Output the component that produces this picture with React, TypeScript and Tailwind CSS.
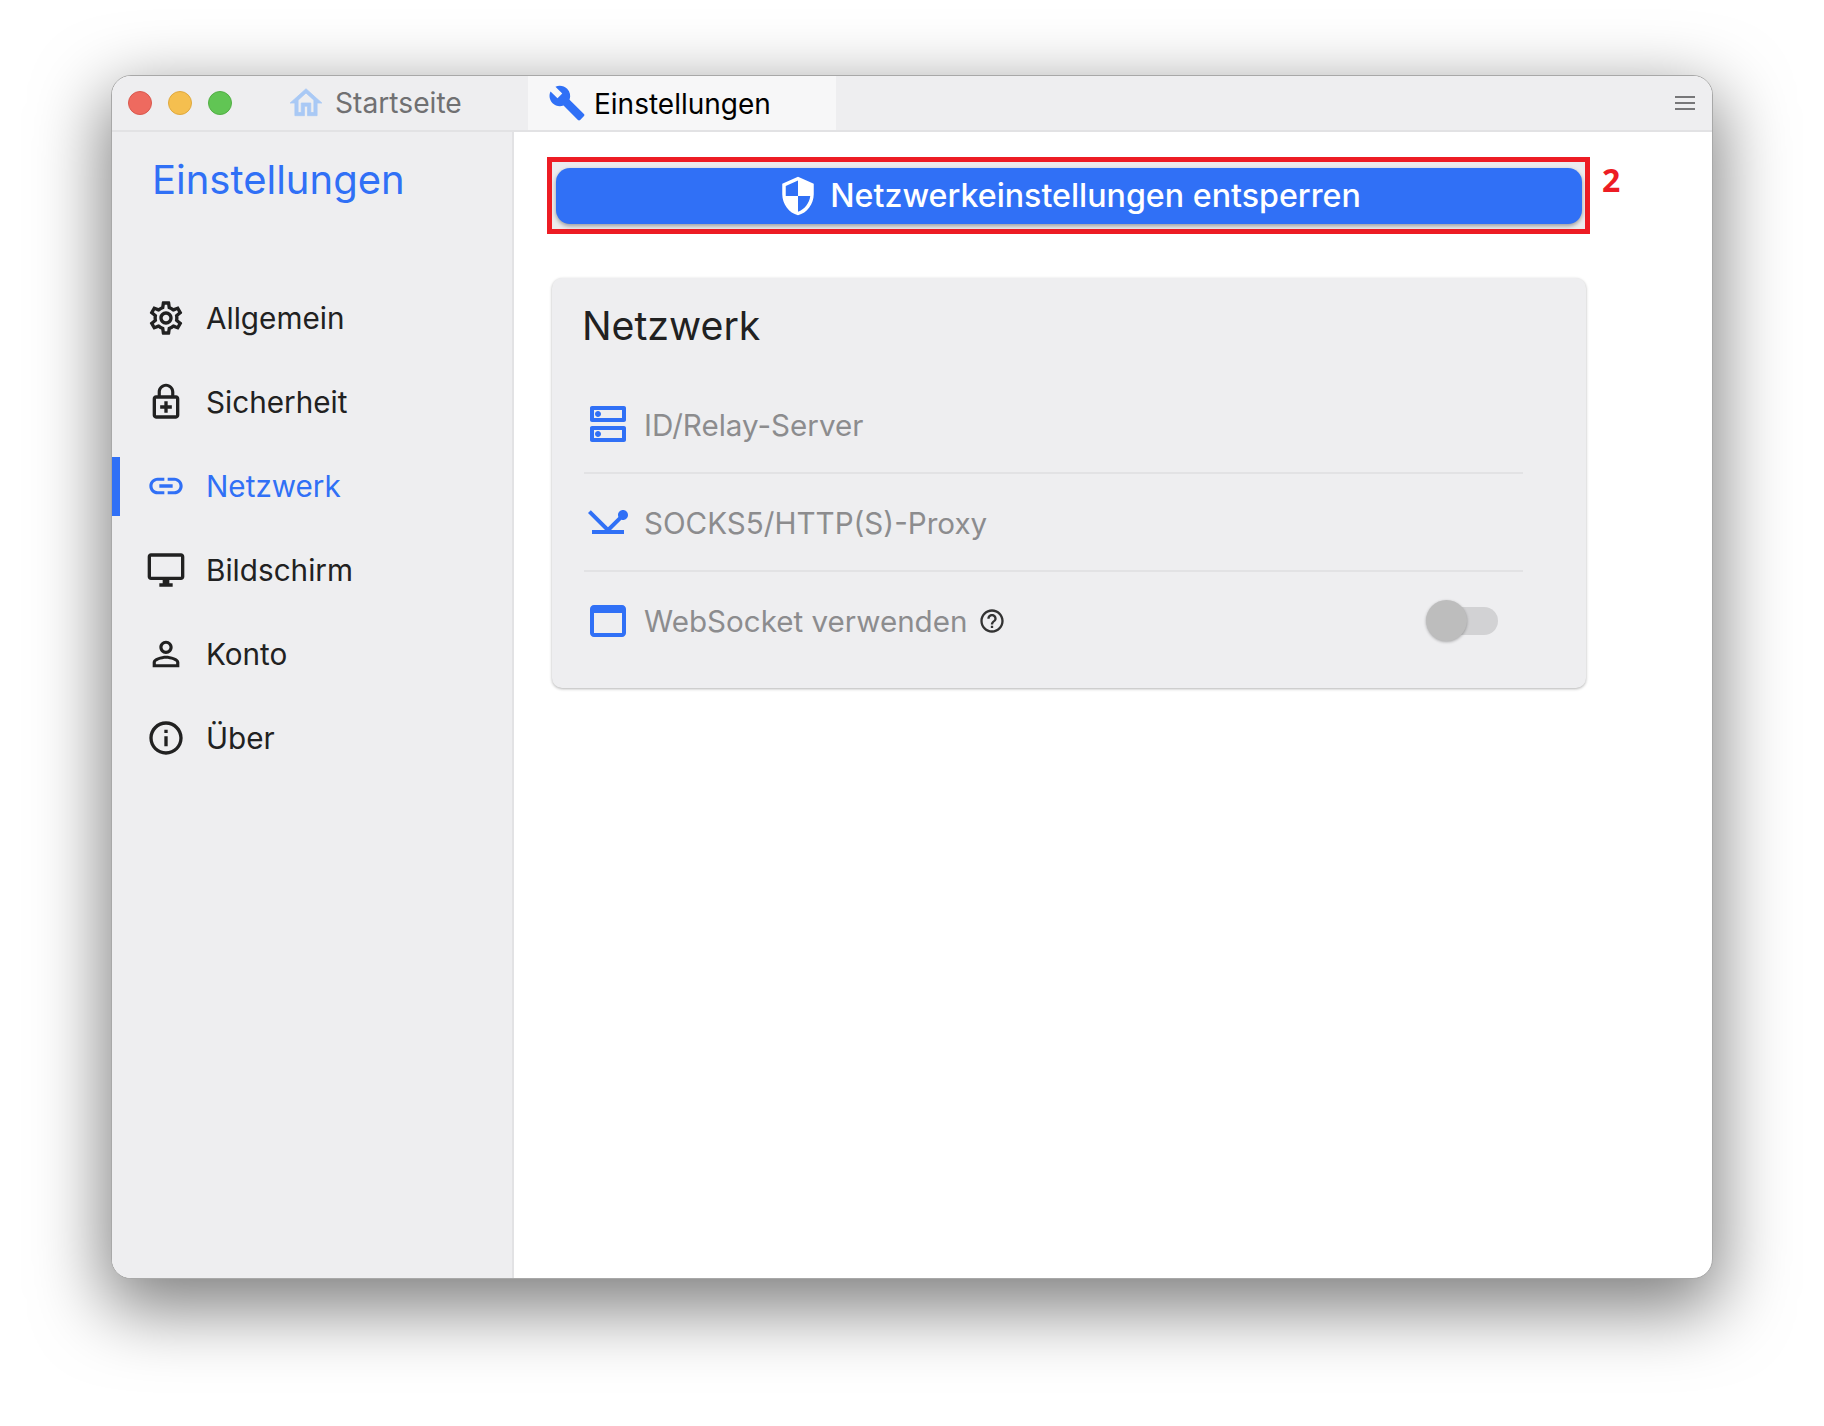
import React from "react";

const P = ({ d, size = 40, className = "" }: { d: string; size?: number; className?: string }) => (
  <svg viewBox="0 0 24 24" width={size} height={size} fill="currentColor" className={`shrink-0 ${className}`}>
    <path d={d} />
  </svg>
);

const I = {
  gear: "M19.43 12.98c.04-.32.07-.64.07-.98 0-.34-.03-.66-.07-.98l2.11-1.65c.19-.15.24-.42.12-.64l-2-3.46c-.09-.16-.26-.25-.44-.25-.06 0-.12.01-.17.03l-2.49 1c-.52-.4-1.08-.73-1.69-.98l-.38-2.65C14.46 2.18 14.25 2 14 2h-4c-.25 0-.46.18-.49.42l-.38 2.65c-.61.25-1.17.59-1.69.98l-2.49-1c-.06-.02-.12-.03-.18-.03-.17 0-.34.09-.43.25l-2 3.46c-.13.22-.07.49.12.64l2.11 1.65c-.04.32-.07.65-.07.98 0 .33.03.66.07.98l-2.11 1.65c-.19.15-.24.42-.12.64l2 3.46c.09.16.26.25.44.25.06 0 .12-.01.17-.03l2.49-1c.52.4 1.08.73 1.69.98l.38 2.65c.03.24.24.42.49.42h4c.25 0 .46-.18.49-.42l.38-2.65c.61-.25 1.17-.59 1.69-.98l2.49 1c.06.02.12.03.18.03.17 0 .34-.09.43-.25l2-3.46c.12-.22.07-.49-.12-.64l-2.11-1.65zm-1.98-1.71c.04.31.05.52.05.73 0 .21-.02.43-.05.73l-.14 1.13.89.7 1.08.84-.7 1.21-1.27-.51-1.04-.42-.9.68c-.43.32-.84.56-1.25.73l-1.06.43-.16 1.13-.2 1.35h-1.4l-.19-1.35-.16-1.13-1.06-.43c-.43-.18-.83-.41-1.23-.71l-.91-.7-1.06.43-1.27.51-.7-1.21 1.08-.84.89-.7-.14-1.13c-.03-.31-.05-.54-.05-.74s.02-.43.05-.73l.14-1.13-.89-.7-1.08-.84.7-1.21 1.27.51 1.04.42.9-.68c.43-.32.84-.56 1.25-.73l1.06-.43.16-1.13.2-1.35h1.39l.19 1.35.16 1.13 1.06.43c.43.18.83.41 1.23.71l.91.7 1.06-.43 1.27-.51.7 1.21-1.07.85-.89.7.14 1.13zM12 8c-2.21 0-4 1.79-4 4s1.79 4 4 4 4-1.79 4-4-1.79-4-4-4zm0 6c-1.1 0-2-.9-2-2s.9-2 2-2 2 .9 2 2-.9 2-2 2z",
  lock: "M18 8h-1V6c0-2.76-2.24-5-5-5S7 3.24 7 6v2H6c-1.1 0-2 .9-2 2v10c0 1.1.9 2 2 2h12c1.1 0 2-.9 2-2V10c0-1.1-.9-2-2-2zM8.9 6c0-1.71 1.39-3.1 3.1-3.1s3.1 1.39 3.1 3.1v2H8.9V6zM18 20H6V10h12v10zm-5-8.5h-2V14H8.5v2H11v2.5h2V16h2.5v-2H13z",
  link: "M3.9 12c0-1.71 1.39-3.1 3.1-3.1h4V7H7c-2.76 0-5 2.24-5 5s2.24 5 5 5h4v-1.9H7c-1.71 0-3.1-1.39-3.1-3.1zM8 13h8v-2H8v2zm9-6h-4v1.9h4c1.71 0 3.1 1.39 3.1 3.1s-1.39 3.1-3.1 3.1h-4V17h4c2.76 0 5-2.24 5-5s-2.24-5-5-5z",
  desktop: "M21 2H3c-1.1 0-2 .9-2 2v12c0 1.1.9 2 2 2h7v2H8v2h8v-2h-2v-2h7c1.1 0 2-.9 2-2V4c0-1.1-.9-2-2-2zm0 14H3V4h18v12z",
  person: "M12 5.9c1.16 0 2.1.94 2.1 2.1s-.94 2.1-2.1 2.1S9.9 9.16 9.9 8s.94-2.1 2.1-2.1m0 9c2.97 0 6.1 1.46 6.1 2.1v1.1H5.9V17c0-.64 3.13-2.1 6.1-2.1M12 4C9.79 4 8 5.79 8 8s1.79 4 4 4 4-1.79 4-4-1.79-4-4-4zm0 9c-2.67 0-8 1.34-8 4v3h16v-3c0-2.66-5.33-4-8-4z",
  info: "M11 7h2v2h-2zm0 4h2v6h-2zm1-9C6.48 2 2 6.48 2 12s4.48 10 10 10 10-4.48 10-10S17.52 2 12 2zm0 18c-4.41 0-8-3.59-8-8s3.59-8 8-8 8 3.59 8 8-3.59 8-8 8z",
  help: "M11 18h2v-2h-2v2zm1-16C6.48 2 2 6.48 2 12s4.48 10 10 10 10-4.48 10-10S17.52 2 12 2zm0 18c-4.41 0-8-3.59-8-8s3.59-8 8-8 8 3.59 8 8-3.59 8-8 8zm0-14c-2.21 0-4 1.79-4 4h2c0-1.1.9-2 2-2s2 .9 2 2c0 2-3 1.75-3 5h2c0-2.25 3-2.5 3-5 0-2.21-1.79-4-4-4z",
  wrench: "M22.7 19l-9.1-9.1c.9-2.3.4-5-1.5-6.9-2-2-5-2.4-7.4-1.3L9 6 6 9 1.6 4.7C.4 7.1.9 10.1 2.9 12.1c1.9 1.9 4.6 2.4 6.9 1.5l9.1 9.1c.4.4 1 .4 1.4 0l2.3-2.3c.5-.4.5-1.1.1-1.4z",
  home: "M12 5.69l5 4.5V18h-2v-6H9v6H7v-7.81l5-4.5M12 3L2 12h3v8h6v-6h2v6h6v-8h3L12 3z",
  shield: "M12 1L3 5v6c0 5.55 3.84 10.74 9 12 5.16-1.26 9-6.45 9-12V5l-9-4zm0 10.99h7c-.53 4.12-3.28 7.79-7 8.94V12H5V6.3l7-3.11v8.8z",
  dns: "M19 15v4H5v-4h14m1-2H4c-.55 0-1 .45-1 1v6c0 .55.45 1 1 1h16c.55 0 1-.45 1-1v-6c0-.55-.45-1-1-1zM7 18.5c-.82 0-1.5-.67-1.5-1.5s.68-1.5 1.5-1.5 1.5.67 1.5 1.5-.67 1.5-1.5 1.5zM19 5v4H5V5h14m1-2H4c-.55 0-1 .45-1 1v6c0 .55.45 1 1 1h16c.55 0 1-.45 1-1V4c0-.55-.45-1-1-1zM7 8.5c-.82 0-1.5-.67-1.5-1.5S6.18 5.5 7 5.5s1.5.68 1.5 1.5S7.83 8.5 7 8.5z",
  ping: "M12 14.67L3.41 6.09 2 7.5l8.5 8.5H4v2h16v-2h-6.5l5.15-5.15C18.91 10.95 19.2 11 19.5 11c1.38 0 2.5-1.12 2.5-2.5S20.88 6 19.5 6 17 7.12 17 8.5c0 .35.07.67.2.97L12 14.67z",
  web: "M19 4H5c-1.11 0-2 .9-2 2v12c0 1.1.89 2 2 2h14c1.1 0 2-.9 2-2V6c0-1.1-.89-2-2-2zm0 14H5V8h14v10z",
};

const nav = [
  { label: "Allgemein", icon: I.gear },
  { label: "Sicherheit", icon: I.lock },
  { label: "Netzwerk", icon: I.link, active: true },
  { label: "Bildschirm", icon: I.desktop },
  { label: "Konto", icon: I.person },
  { label: "Über", icon: I.info },
];

export default function App() {
  return (
    <div className="min-h-[1426px] bg-white pt-[75px] pl-[111px] font-['Inter',sans-serif] antialiased overflow-hidden">
      <div className="w-[1602px] h-[1204px] rounded-[20px] border border-[#a8a8a8] bg-white shadow-[0_24px_70px_6px_rgba(0,0,0,0.5)] overflow-hidden flex flex-col">
        {/* title bar */}
        <div className="h-[56px] shrink-0 bg-[#eeeef0] border-b-2 border-[#e2e2e4] flex items-end">
          <div className="flex items-center gap-[16px] pl-[16px] h-[54px]">
            <span className="w-[24px] h-[24px] rounded-full bg-[#ee6a5f] border border-[#d9584e]" />
            <span className="w-[24px] h-[24px] rounded-full bg-[#f5bf4f] border border-[#dfa83e]" />
            <span className="w-[24px] h-[24px] rounded-full bg-[#61c554] border border-[#52ae45]" />
          </div>
          <div className="flex items-center h-[54px] w-[296px] pl-[58px] gap-[10px] text-[28.2px] text-[#707072]">
            <P d={I.home} size={38} className="text-[#a9c9f5] -ml-[3px] stroke-current stroke-[0.5]" />
            <span className="pt-[1px]">Startseite</span>
          </div>
          <div className="flex items-center h-[54px] w-[308px] bg-[#f7f7f8] pl-[20px] gap-[8px] text-[28px] text-black">
            <P d={I.wrench} size={38} className="text-[#3070f6]" />
            <span className="pt-[1px]">Einstellungen</span>
          </div>
          <div className="flex-1" />
          <div className="h-[54px] flex flex-col justify-center gap-[4px] pr-[17px]">
            <span className="block w-[20px] h-[2px] bg-[#777779]" />
            <span className="block w-[20px] h-[2px] bg-[#777779]" />
            <span className="block w-[20px] h-[2px] bg-[#777779]" />
          </div>
        </div>

        <div className="flex flex-1 min-h-0">
          {/* sidebar */}
          <aside className="w-[402px] shrink-0 bg-[#eeeef0] border-r-2 border-[#e2e2e4]">
            <div className="pl-[40px] pt-[23px] h-[144px] text-[40px] leading-[50px] text-[#3070f6]">Einstellungen</div>
            <nav>
              {nav.map((n) => (
                <div key={n.label} className={`h-[84px] flex items-center ${n.active ? "text-[#3070f6]" : "text-[#212121]"}`}>
                  <span className={`w-[8px] h-[59px] ${n.active ? "bg-[#3070f6]" : ""}`} />
                  <div className="pl-[26px] flex items-center gap-[20px] text-[29.7px]">
                    <P d={n.icon} />
                    <span>{n.label}</span>
                  </div>
                </div>
              ))}
            </nav>
          </aside>

          {/* content */}
          <main className="flex-1 pl-[33px] pt-[25px]">
            <div className="flex items-start gap-[12px]">
              <div className="w-[1043px] h-[77px] border-[5px] border-[#ed1c24] bg-[#ececee] pl-[4px] pr-[3px] pt-[6px]">
                <button className="w-full h-[56px] rounded-[14px] bg-[#3070f6] shadow-[0_2px_4px_rgba(0,0,0,0.35)] text-white text-[32.2px] font-medium flex items-center justify-center gap-[11px]">
                  <P d={I.shield} size={42} />
                  <span>Netzwerkeinstellungen entsperren</span>
                </button>
              </div>
              <span className="text-[32px] leading-[46px] font-bold text-[#ed1c24] font-['Open_Sans',sans-serif]">2</span>
            </div>

            <section className="ml-[5px] mt-[44px] w-[1034px] h-[410px] rounded-[10px] bg-[#eeeef0] shadow-[0_1px_3px_rgba(0,0,0,0.3)] pl-[32px] pr-[63px]">
              <h2 className="text-[39.3px] leading-[48px] pt-[24px] h-[98px] text-[#212121] -ml-[2px]">Netzwerk</h2>
              <div className="h-[98px] flex items-center gap-[12px] border-b-2 border-[#e2e2e4] text-[29.6px] text-[#8c8c8e]">
                <P d={I.dns} size={48} className="text-[#3070f6]" />
                <span className="pt-[2px]">ID/Relay-Server</span>
              </div>
              <div className="h-[98px] flex items-center gap-[12px] border-b-2 border-[#e2e2e4] text-[29.6px] text-[#8c8c8e]">
                <P d={I.ping} size={48} className="text-[#3070f6]" />
                <span className="pt-[2px]">SOCKS5/HTTP(S)-Proxy</span>
              </div>
              <div className="h-[98px] flex items-center gap-[11px] text-[29.6px] text-[#8c8c8e]">
                <P d={I.web} size={48} className="text-[#3070f6] ml-0 mr-[1px]" />
                <span>WebSocket verwenden</span>
                <P d={I.help} size={28} className="text-[#333333]" />
                <div className="flex-1" />
                <div className="relative w-[62px] h-[28px] rounded-full bg-[#d2d2d4] mr-[25px]">
                  <span className="absolute -left-[10px] -top-[7px] w-[41px] h-[41px] rounded-full bg-[#bdbdbd] shadow-[0_1px_3px_rgba(0,0,0,0.3)]" />
                </div>
              </div>
            </section>
          </main>
        </div>
      </div>
    </div>
  );
}
